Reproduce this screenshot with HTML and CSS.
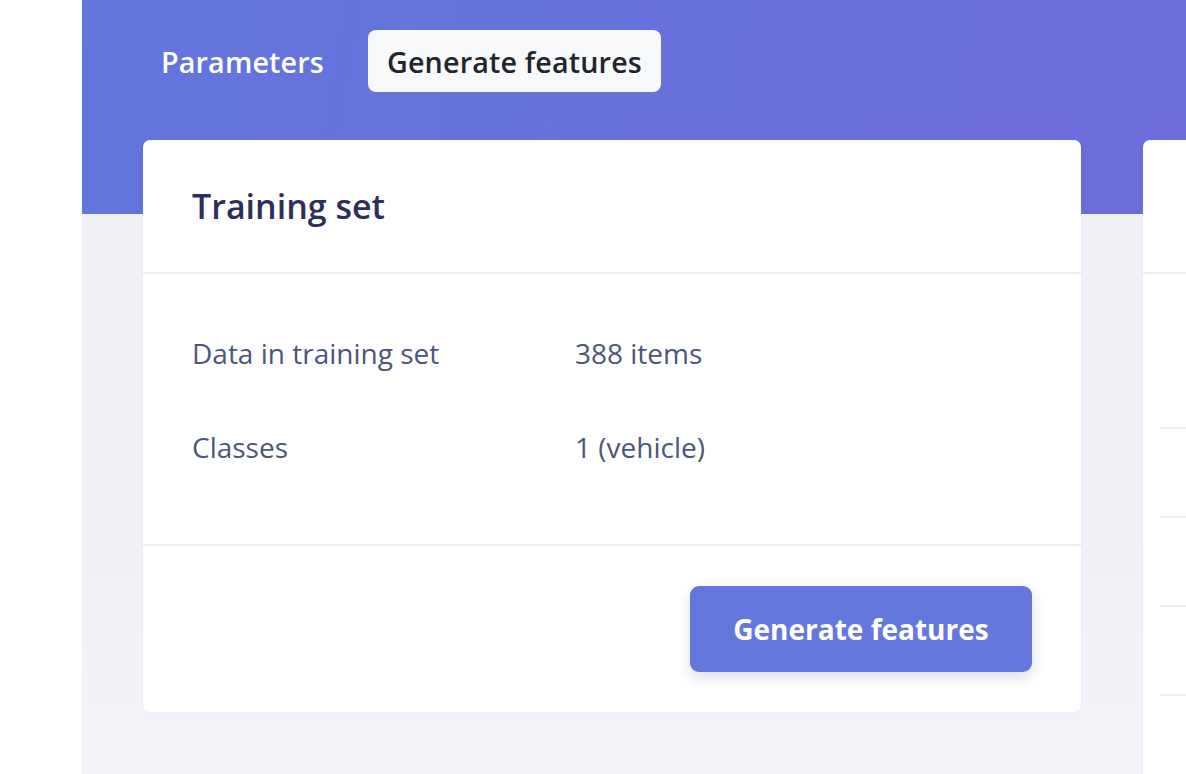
FILE: index.html
```html
<!DOCTYPE html>
<html lang="en">
<head>
<meta charset="utf-8">
<title>Generate features</title>
<link rel="stylesheet" href="styles.css">
</head>
<body>
<div class="app">
  <aside class="sidebar"></aside>
  <main class="main">
    <nav class="tabs">
      <a class="tab">Parameters</a>
      <a class="tab active">Generate features</a>
    </nav>
    <div class="cards">
      <section class="card">
        <header class="card-header">
          <h2 class="card-title">Training set</h2>
        </header>
        <div class="card-body">
          <div class="info-row">
            <span class="info-label">Data in training set</span>
            <span class="info-value">388 items</span>
          </div>
          <div class="info-row">
            <span class="info-label">Classes</span>
            <span class="info-value">1 (vehicle)</span>
          </div>
        </div>
        <footer class="card-footer">
          <button class="btn-primary">Generate features</button>
        </footer>
      </section>
      <section class="card card-side">
        <div class="card-header"></div>
        <div class="side-list">
          <div class="side-row"></div>
          <div class="side-row"></div>
          <div class="side-row"></div>
          <div class="side-row"></div>
          <div class="side-row"></div>
        </div>
      </section>
    </div>
  </main>
</div>
</body>
</html>
```
FILE: styles.css
```css
* { box-sizing: border-box; }
html, body { margin: 0; padding: 0; height: 100%; }
body {
  font-family: "Open Sans", "Noto Sans", "Liberation Sans", sans-serif;
  background: #ffffff;
  overflow: hidden;
}
.app { display: flex; height: 774px; }
.sidebar { width: 82px; flex: none; background: #ffffff; }
.main {
  flex: 1;
  min-width: 0;
  overflow: hidden;
  background:
    linear-gradient(100deg, #6276dc 0%, #6d6cdb 100%) top left / 100% 214px no-repeat,
    linear-gradient(180deg, #f0f1f6 0%, #f0f1f6 70%, #f4f5fa 100%);
  padding: 30px 0 0 61px;
}
.tabs { display: flex; gap: 26px; height: 62px; }
.tab {
  display: flex;
  align-items: center;
  padding: 0 18px;
  border-radius: 8px;
  font-size: 28.7px;
  font-weight: 600;
  color: #ffffff;
  letter-spacing: 0.15px;
}
.tab.active { background: #f8f9fb; color: #222529; padding: 0 19px; }
.cards { display: flex; align-items: flex-start; gap: 62px; margin-top: 48px; }
.card {
  flex: none;
  width: 938px;
  background: #ffffff;
  border-radius: 7px;
  box-shadow: 0 0 2px rgba(40, 50, 90, 0.06);
}
.card-header {
  height: 134px;
  display: flex;
  align-items: center;
  padding: 0 49px;
  border-bottom: 2px solid #efeff2;
}
.card-title {
  margin: 0;
  font-size: 34px;
  font-weight: 600;
  color: #2d2e5a;
}
.card-body { padding: 56px 49px 26px; border-bottom: 2px solid #efeff2; }
.info-row {
  display: flex;
  align-items: center;
  height: 46px;
  margin-bottom: 48px;
  font-size: 28px;
  color: #4b5778;
}
.info-label { width: 383px; flex: none; }
.card-footer {
  display: flex;
  justify-content: flex-end;
  padding: 40px 49px 40px;
}
.btn-primary {
  height: 86px;
  width: 342px;
  border: none;
  border-radius: 9px;
  background: #6477dd;
  color: #ffffff;
  font-family: inherit;
  font-size: 28px;
  font-weight: 700;
  box-shadow: 0 6px 14px rgba(60, 70, 130, 0.18);
}
.card-side { height: 700px; border-radius: 7px 7px 0 0; }
.side-list { padding: 0 0 0 17px; margin-top: 153px; }
.side-row { height: 89px; border-top: 2px solid #efeff2; }
```
